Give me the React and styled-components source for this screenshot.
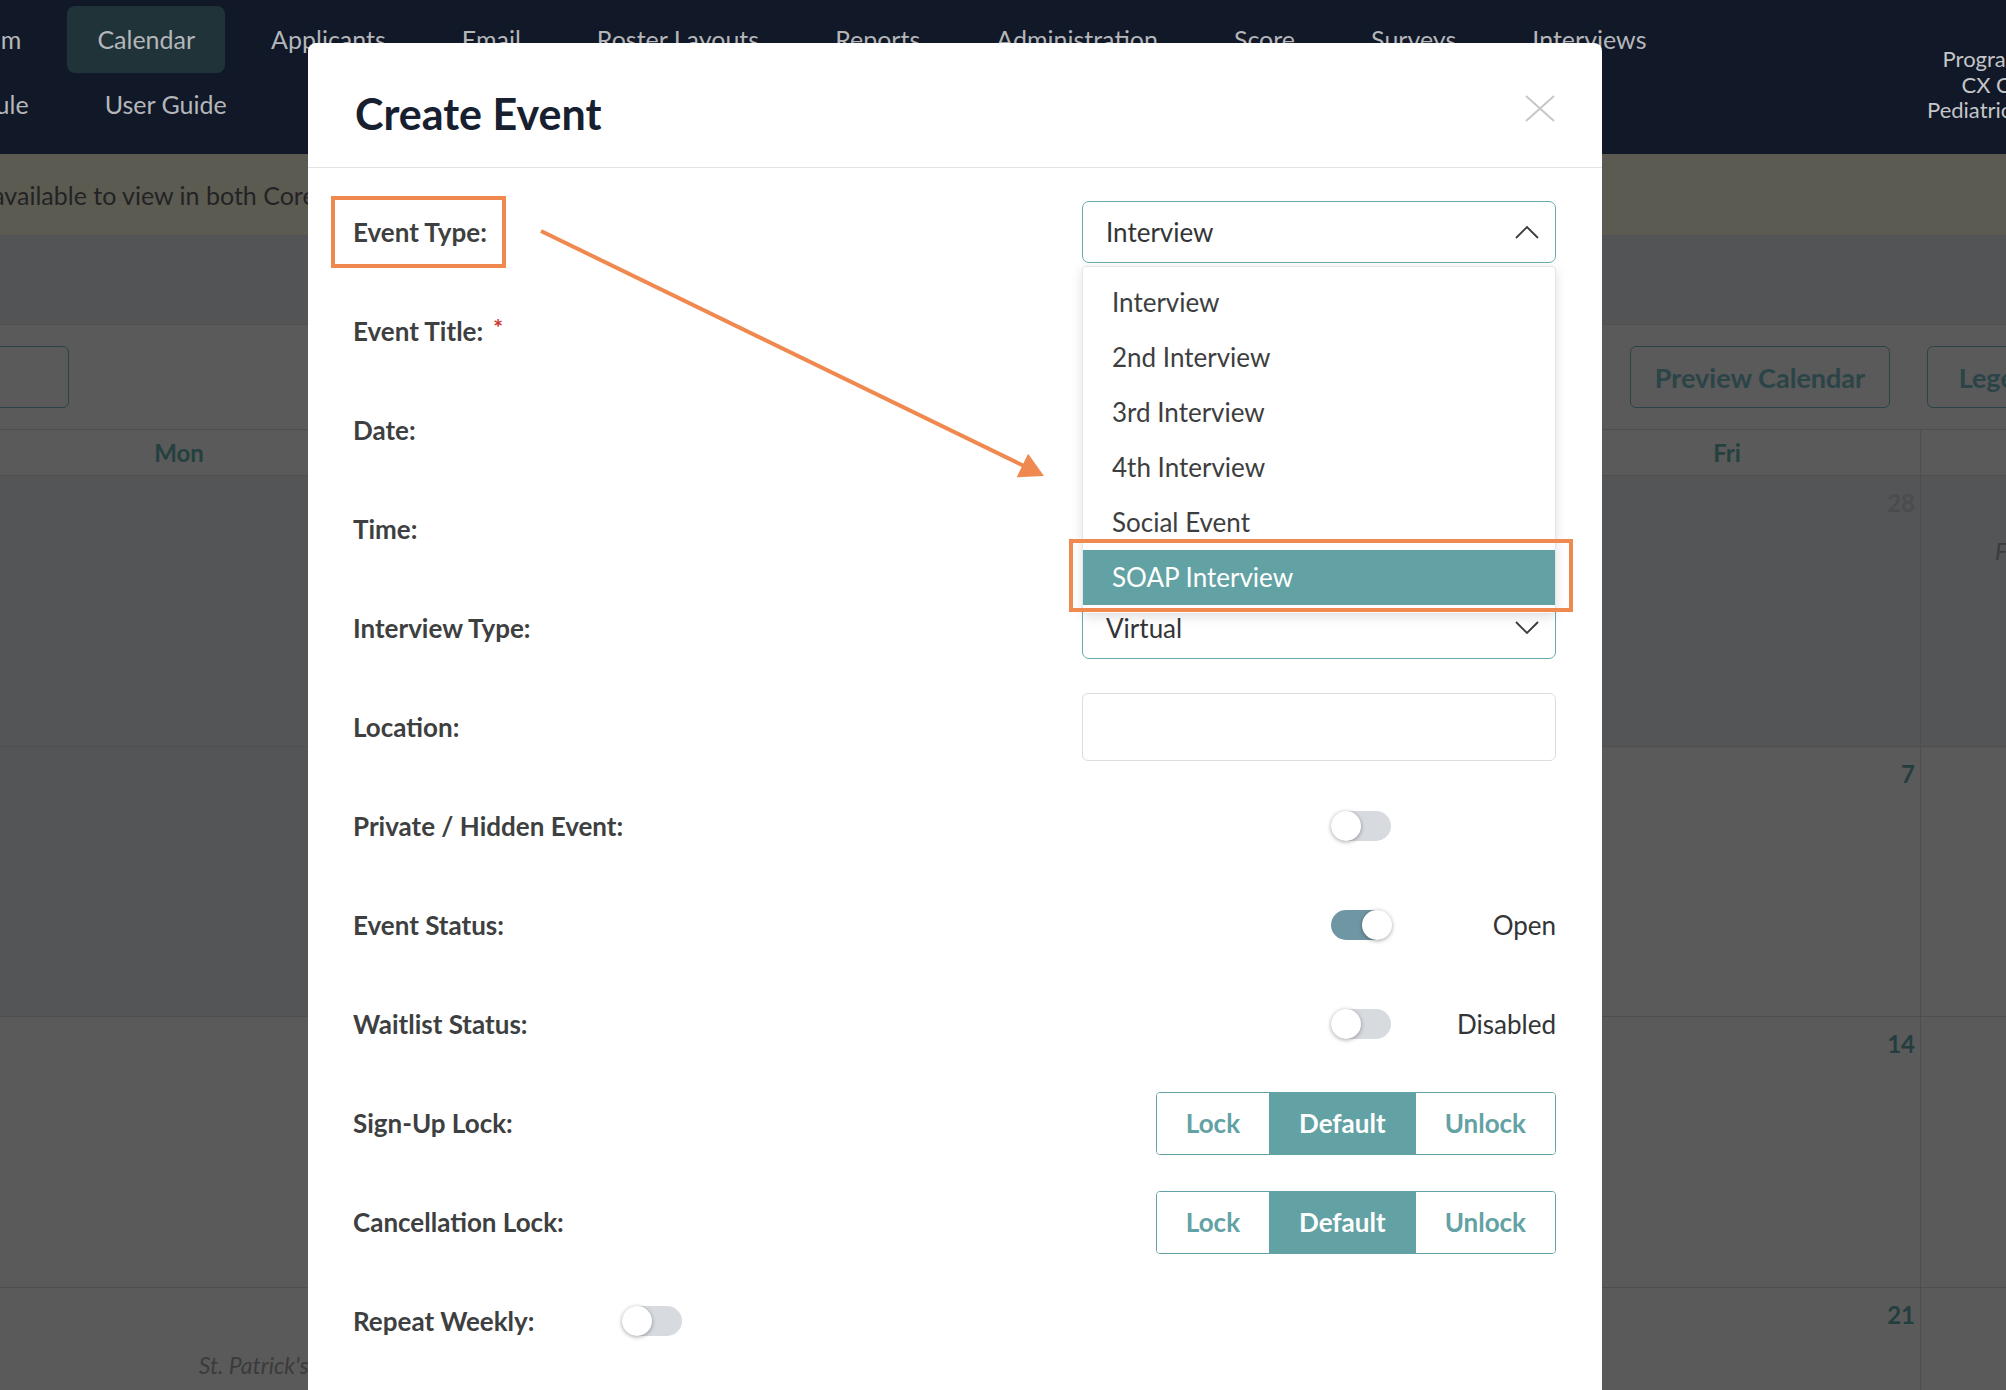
import React from 'react'
import styled, { createGlobalStyle } from 'styled-components'

const GlobalStyle = createGlobalStyle`
  html, body {
    margin: 0;
    padding: 0;
    overflow: hidden;
  }
  * { box-sizing: border-box; }
`

const ORANGE = '#f0894f'
const TEAL = '#63a2a4'

const Page = styled.div`
  position: relative;
  width: 2006px;
  height: 1390px;
  overflow: hidden;
  background: #5a5a5a;
  font-family: Lato, 'Noto Sans', sans-serif;
`

const TopNav = styled.header`
  display: flex;
  justify-content: space-between;
  height: 154px;
  padding-top: 6px;
  background: #111827;
`

const NavRows = styled.nav`
  display: flex;
  flex-direction: column;
  margin-left: -101px;
`

const NavRow = styled.div`
  display: flex;
  gap: 16px;
  margin-top: ${p => p.$mt || 0}px;
`

const NavItem = styled.a`
  display: block;
  height: 67px;
  padding: 0 30px;
  line-height: 67px;
  border-radius: 8px;
  font-size: 25px;
  color: #b4b6ba;
  white-space: nowrap;
  background: ${p => (p.$active ? '#1f3339' : 'transparent')};
`

const Profile = styled.div`
  flex: none;
  width: 180px;
  margin-top: 40px;
  margin-right: -101px;
  text-align: center;
  font-size: 22px;
  line-height: 25.5px;
  color: #c3c5c8;
  white-space: nowrap;
`

const Banner = styled.div`
  display: flex;
  align-items: center;
  height: 81px;
  background: #5b5b52;
  font-size: 25px;
  color: #232325;
  white-space: nowrap;
  span { margin-left: -128px; }
`

const SubHeader = styled.div`
  height: 89px;
  background: #535456;
`

const Toolbar = styled.div`
  display: flex;
  justify-content: space-between;
  height: 105px;
  padding-top: 21px;
  border-top: 1px solid #505051;
`

const ToolGroup = styled.div`
  display: flex;
  gap: 37px;
  margin-left: ${p => p.$ml || 0}px;
  margin-right: ${p => p.$mr || 0}px;
`

const OutlineButton = styled.button`
  height: 62px;
  width: ${p => (p.$w ? `${p.$w}px` : 'auto')};
  padding: 0;
  border: 1.5px solid #2b4448;
  border-radius: 6px;
  background: transparent;
  font-family: inherit;
  font-size: 27px;
  font-weight: 700;
  color: #2a4447;
  white-space: nowrap;
`

const Calendar = styled.div`
  display: grid;
  grid-template-columns: repeat(7, 387px);
  grid-auto-rows: 270.5px;
  margin-left: -401px;
`

const DayHead = styled.div`
  display: grid;
  grid-template-columns: repeat(7, 387px);
  margin-left: -401px;
  height: 47px;
  border-top: 1px solid #4e4e4f;
  border-bottom: 1px solid #4e4e4f;
`

const DayName = styled.div`
  display: flex;
  align-items: center;
  justify-content: center;
  border-right: 1px solid #4e4e4f;
  font-size: 24px;
  font-weight: 700;
  color: #24413f;
`

const Cell = styled.div`
  display: flex;
  flex-direction: column;
  padding: 12px 5px 0 0;
  border-right: 1px solid #4e4e4f;
  border-bottom: 1px solid #4e4e4f;
  background: ${p => (p.$dim ? '#545556' : '#5a5a5a')};
`

const DayNum = styled.div`
  text-align: right;
  font-size: 24px;
  font-weight: 700;
  color: ${p => (p.$faded ? '#4b4c4d' : '#243e3f')};
`

const Holiday = styled.div`
  margin-top: ${p => p.$mt || 0}px;
  text-align: ${p => p.$align || 'right'};
  padding-right: ${p => p.$pr || 0}px;
  padding-left: ${p => p.$pl || 0}px;
  font-size: 23px;
  font-style: italic;
  color: #3b3b3c;
  white-space: nowrap;
`

/* modal */

const Modal = styled.section`
  position: absolute;
  left: 308px;
  top: 43px;
  width: 1294px;
  bottom: -20px;
  background: #fff;
  border-radius: 8px;
  z-index: 10;
`

const ModalHeader = styled.div`
  display: flex;
  align-items: center;
  justify-content: space-between;
  height: 125px;
  padding: 6px 47px 0 47px;
  border-bottom: 1px solid #e2e3e5;
`

const Title = styled.h2`
  margin: 10px 0 0;
  font-size: 43px;
  font-weight: 700;
  color: #17202e;
`

const CloseButton = styled.button`
  display: flex;
  padding: 0;
  border: 0;
  background: none;
`

const ModalBody = styled.div`
  padding: 33px 46px 0 45px;
`

const FieldRow = styled.div`
  display: grid;
  grid-template-columns: ${p => p.$cols || '1fr 474px'};
  grid-template-rows: 62px;
  align-items: center;
  height: 62px;
  margin-bottom: 37px;
  position: relative;
  z-index: ${p => (p.$raised ? 5 : 'auto')};
`

const Label = styled.label`
  position: relative;
  justify-self: start;
  display: inline-block;
  line-height: 32px;
  font-size: 26px;
  font-weight: 700;
  color: #3e3f41;

  ${p =>
    p.$marked &&
    `
    &::after {
      content: '';
      position: absolute;
      left: -22px;
      right: -19px;
      top: -20px;
      bottom: -20px;
      border: 4px solid ${ORANGE};
    }
  `}
`

const Required = styled.span`
  position: relative;
  top: -5px;
  margin-left: 10px;
  font-size: 23px;
  color: #d0312d;
`

const Control = styled.div`
  position: relative;
`

const Select = styled.div`
  display: flex;
  align-items: center;
  justify-content: space-between;
  height: 62px;
  padding: 0 16px 0 23px;
  border: 1.5px solid #6aa9ab;
  border-radius: 7px;
  font-size: 26px;
  color: #333436;
`

const TextInput = styled.div`
  height: 68px;
  margin: -3px 0;
  border: 1px solid #dcdddf;
  border-radius: 6px;
`

const Menu = styled.ul`
  position: absolute;
  top: 65px;
  left: 0;
  right: 0;
  margin: 0;
  padding: 8px 0;
  list-style: none;
  background: #fff;
  border: 1px solid #e3e6e8;
  border-radius: 4px;
  box-shadow: 0 3px 12px rgba(0, 0, 0, 0.12);
`

const Option = styled.li`
  position: relative;
  height: 55px;
  padding-left: 29px;
  line-height: 55px;
  font-size: 26px;
  color: ${p => (p.$selected ? '#fff' : '#3d3e40')};
  background: ${p => (p.$selected ? TEAL : 'transparent')};

  ${p =>
    p.$marked &&
    `
    &::after {
      content: '';
      position: absolute;
      left: -14px;
      right: -18px;
      top: -11px;
      bottom: -7px;
      border: 4px solid ${ORANGE};
    }
  `}
`

const ToggleLine = styled.div`
  display: flex;
  align-items: center;
  justify-content: flex-end;
`

const Track = styled.span`
  position: relative;
  display: inline-block;
  width: 60px;
  height: 30px;
  border-radius: 15px;
  background: ${p => (p.$on ? '#6f97a3' : '#d7dadf')};

  &::after {
    content: '';
    position: absolute;
    top: 0;
    left: ${p => (p.$on ? '31px' : '0')};
    width: 30px;
    height: 30px;
    border-radius: 50%;
    background: #fff;
    box-shadow: 0 1px 4px rgba(0, 0, 0, 0.35);
  }
`

const StatusText = styled.span`
  width: 165px;
  text-align: right;
  font-size: 26px;
  color: #333436;
`

const Segmented = styled.div`
  justify-self: end;
  display: flex;
  height: 63px;
  border: 1.5px solid ${TEAL};
  border-radius: 4px;
  overflow: hidden;
`

const Segment = styled.button`
  padding: 0 ${p => p.$px}px;
  border: 0;
  font-family: inherit;
  font-size: 26px;
  font-weight: 700;
  color: ${p => (p.$active ? '#fff' : TEAL)};
  background: ${p => (p.$active ? TEAL : '#fff')};
`

const Annotation = styled.svg`
  position: absolute;
  left: 0;
  top: 0;
  pointer-events: none;
  z-index: 6;
`

const Chevron = ({ up }) => (
  <svg width="24" height="14" viewBox="0 0 24 14">
    <polyline
      points={up ? '1,13 12,2 23,13' : '1,1 12,12 23,1'}
      fill="none"
      stroke="#3a3b3d"
      strokeWidth="1.8"
    />
  </svg>
)

const Toggle = ({ on, text }) => (
  <ToggleLine>
    <Track $on={on} />
    <StatusText>{text}</StatusText>
  </ToggleLine>
)

const LockSwitch = () => (
  <Segmented>
    <Segment $px={29}>Lock</Segment>
    <Segment $px={30} $active>Default</Segment>
    <Segment $px={29}>Unlock</Segment>
  </Segmented>
)

const eventTypes = ['Interview', '2nd Interview', '3rd Interview', '4th Interview', 'Social Event', 'SOAP Interview']

const navTop = ['Program', 'Calendar', 'Applicants', 'Email', 'Roster Layouts', 'Reports', 'Administration', 'Score', 'Surveys', 'Interviews']

const days = ['Sun', 'Mon', 'Tue', 'Wed', 'Thu', 'Fri', 'Sat']

const weeks = [
  [23, 24, 25, 26, 27, 28, 1],
  [2, 3, 4, 5, 6, 7, 8],
  [9, 10, 11, 12, 13, 14, 15],
  [16, 17, 18, 19, 20, 21, 22],
]

export default function App() {
  return (
    <Page>
      <GlobalStyle />
      <TopNav>
        <NavRows>
          <NavRow>
            {navTop.map(item => (
              <NavItem key={item} $active={item === 'Calendar'}>
                {item}
              </NavItem>
            ))}
          </NavRow>
          <NavRow $mt={-2}>
            <NavItem>Schedule</NavItem>
            <NavItem>User Guide</NavItem>
          </NavRow>
        </NavRows>
        <Profile>
          <div>Program Admin</div>
          <div>CX Ortho 2</div>
          <div>Pediatric Surgery II</div>
        </Profile>
      </TopNav>

      <Banner>
        <span>Events are available to view in both Core and the Applicant Portal.</span>
      </Banner>
      <SubHeader />
      <Toolbar>
        <ToolGroup $ml={-251}>
          <OutlineButton $w={320}>Add Event</OutlineButton>
        </ToolGroup>
        <ToolGroup $mr={-71}>
          <OutlineButton $w={260}>Preview Calendar</OutlineButton>
          <OutlineButton $w={150}>Legend</OutlineButton>
        </ToolGroup>
      </Toolbar>

      <DayHead>
        {days.map(d => (
          <DayName key={d}>{d}</DayName>
        ))}
      </DayHead>
      <Calendar>
        {weeks.map((week, wi) =>
          week.map((n, di) => (
            <Cell key={`${wi}-${di}`} $dim={wi === 0 || (wi === 1 && di < 2)}>
              <DayNum $faded={wi === 0 && di < 6}>{n}</DayNum>
              {wi === 0 && di === 6 && (
                <Holiday $mt={20} $align="left" $pl={74}>
                  First Day of Spring Break
                </Holiday>
              )}
              {wi === 3 && di === 1 && (
                <Holiday $mt={22} $pr={14}>
                  St. Patrick's Day
                </Holiday>
              )}
            </Cell>
          ))
        )}
      </Calendar>

      <Modal>
        <ModalHeader>
          <Title>Create Event</Title>
          <CloseButton aria-label="Close">
            <svg width="30" height="27" viewBox="0 0 30 27">
              <line x1="1" y1="1" x2="29" y2="26" stroke="#c6c7c9" strokeWidth="2" />
              <line x1="29" y1="1" x2="1" y2="26" stroke="#c6c7c9" strokeWidth="2" />
            </svg>
          </CloseButton>
        </ModalHeader>

        <ModalBody>
          <FieldRow $raised>
            <Label $marked>Event Type:</Label>
            <Control>
              <Select>
                Interview
                <Chevron up />
              </Select>
              <Menu>
                {eventTypes.map(t => (
                  <Option key={t} $selected={t === 'SOAP Interview'} $marked={t === 'SOAP Interview'}>
                    {t}
                  </Option>
                ))}
              </Menu>
            </Control>
          </FieldRow>

          <FieldRow>
            <Label>
              Event Title:<Required>*</Required>
            </Label>
            <TextInput />
          </FieldRow>

          <FieldRow>
            <Label>Date:</Label>
            <TextInput />
          </FieldRow>

          <FieldRow>
            <Label>Time:</Label>
            <TextInput />
          </FieldRow>

          <FieldRow>
            <Label>Interview Type:</Label>
            <Select>
              Virtual
              <Chevron />
            </Select>
          </FieldRow>

          <FieldRow>
            <Label>Location:</Label>
            <TextInput />
          </FieldRow>

          <FieldRow>
            <Label>Private / Hidden Event:</Label>
            <Toggle />
          </FieldRow>

          <FieldRow>
            <Label>Event Status:</Label>
            <Toggle on text="Open" />
          </FieldRow>

          <FieldRow>
            <Label>Waitlist Status:</Label>
            <Toggle text="Disabled" />
          </FieldRow>

          <FieldRow>
            <Label>Sign-Up Lock:</Label>
            <LockSwitch />
          </FieldRow>

          <FieldRow>
            <Label>Cancellation Lock:</Label>
            <LockSwitch />
          </FieldRow>

          <FieldRow $cols="269px auto">
            <Label>Repeat Weekly:</Label>
            <Track />
          </FieldRow>
        </ModalBody>

        <Annotation width="1294" height="600" viewBox="0 0 1294 600">
          <line x1="233" y1="188" x2="716" y2="423" stroke={ORANGE} strokeWidth="4" />
          <polygon points="736,433 708.7,434.2 720.1,410.8" fill={ORANGE} />
        </Annotation>
      </Modal>
    </Page>
  )
}
